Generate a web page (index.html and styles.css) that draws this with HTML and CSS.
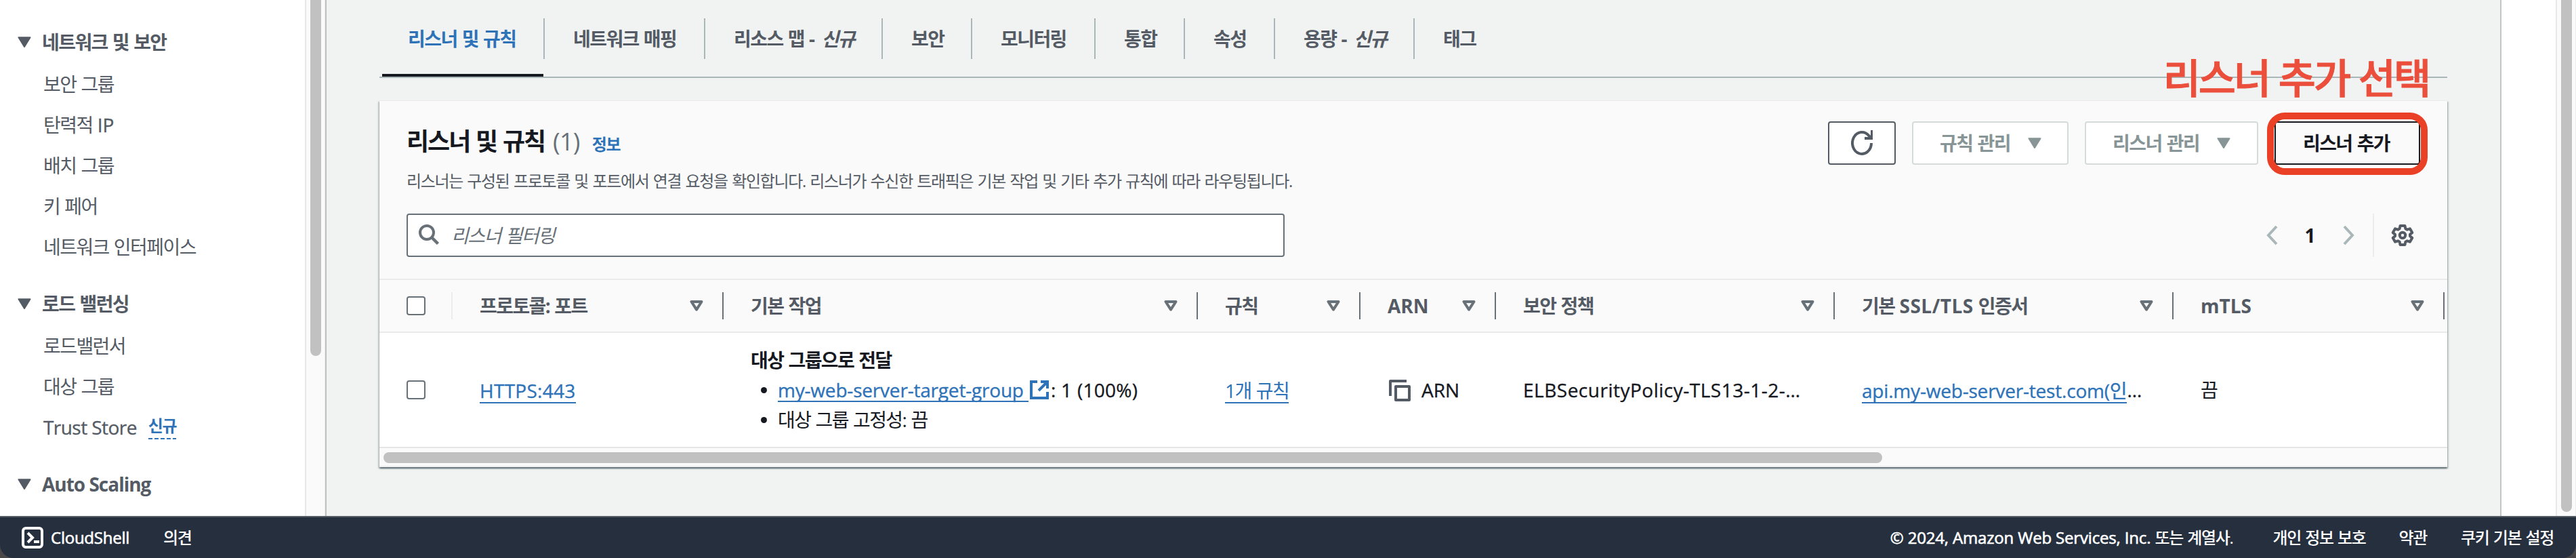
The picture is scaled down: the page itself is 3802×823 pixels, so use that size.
FILE: index.html
```
<!DOCTYPE html>
<html lang="ko">
<head>
<meta charset="utf-8">
<title>리스너 및 규칙</title>
<link rel="stylesheet" href="styles.css">
</head>
<body>
<svg class="defs" width="0" height="0">
  <symbol id="caret" viewBox="0 0 20 16"><path d="M1.5 1.2h17L10 15z" fill="currentColor" stroke="currentColor" stroke-width="2" stroke-linejoin="round"/></symbol>
  <symbol id="sort" viewBox="0 0 20 16"><path d="M2.5 2h15L10 13.6z" fill="none" stroke="currentColor" stroke-width="4" stroke-linejoin="round"/></symbol>
</svg>
<div class="page">
  <nav class="sidebar">
    <h3 class="side-head"><svg class="caret"><use href="#caret"/></svg>네트워크 및 보안</h3>
    <a class="side-item">보안 그룹</a>
    <a class="side-item">탄력적 <span class="en">IP</span></a>
    <a class="side-item">배치 그룹</a>
    <a class="side-item">키 페어</a>
    <a class="side-item">네트워크 인터페이스</a>
    <h3 class="side-head spaced"><svg class="caret"><use href="#caret"/></svg>로드 밸런싱</h3>
    <a class="side-item">로드밸런서</a>
    <a class="side-item">대상 그룹</a>
    <a class="side-item"><span class="en snug">Trust Store</span><span class="new">신규</span></a>
    <h3 class="side-head spaced"><svg class="caret"><use href="#caret"/></svg><span class="en tight">Auto Scaling</span></h3>
  </nav>
  <div class="track side-track"><div class="thumb"></div></div>
  <main class="main">
    <div class="tabs">
      <a class="tab active">리스너 및 규칙</a>
      <a class="tab t2">네트워크 매핑</a>
      <a class="tab t3">리소스 맵 -&nbsp;<i>신규</i></a>
      <a class="tab t4">보안</a>
      <a class="tab t5">모니터링</a>
      <a class="tab t6">통합</a>
      <a class="tab t7">속성</a>
      <a class="tab t8">용량 -&nbsp;<i>신규</i></a>
      <a class="tab t9">태그</a>
    </div>
    <section class="card">
      <header class="card-head">
        <div class="title-row">
          <div class="titles">
            <h2>리스너 및 규칙<span class="count">(1)</span><a class="info">정보</a></h2>
            <p>리스너는 구성된 프로토콜 및 포트에서 연결 요청을 확인합니다. 리스너가 수신한 트래픽은 기본 작업 및 기타 추가 규칙에 따라 라우팅됩니다.</p>
          </div>
          <div class="actions">
            <button class="btn refresh"><svg width="32" height="38" viewBox="0 0 32 38"><path d="M30 19A14 16 0 1 1 26.2 8L30 12" fill="none" stroke="currentColor" stroke-width="4"/><path d="M31 0V12H20" fill="none" stroke="currentColor" stroke-width="4"/></svg></button>
            <button class="btn disabled rules">규칙 관리<svg class="caret"><use href="#caret"/></svg></button>
            <button class="btn disabled listeners">리스너 관리<svg class="caret"><use href="#caret"/></svg></button>
            <div class="marked">
              <button class="btn add">리스너 추가</button>
              <span class="ring"></span>
              <span class="note">리스너 추가 선택</span>
            </div>
          </div>
        </div>
        <div class="filter-row">
          <div class="search"><svg width="32" height="32" viewBox="0 0 32 32"><circle cx="13" cy="12" r="10" fill="none" stroke="currentColor" stroke-width="4"/><path d="M20 19l9.500 9.500" stroke="currentColor" stroke-width="4.500"/></svg><i>리스너 필터링</i></div>
          <div class="pager">
            <svg class="prev" width="18" height="30" viewBox="0 0 18 30"><path d="M15 2L3 15l12 13" fill="none" stroke="#aab7b8" stroke-width="4"/></svg>
            <b class="en">1</b>
            <svg class="next" width="18" height="30" viewBox="0 0 18 30"><path d="M3 2l12 13L3 28" fill="none" stroke="#aab7b8" stroke-width="4"/></svg>
            <span class="gear"><svg width="34" height="34" viewBox="0 0 34 34"><path d="M13.500 3h7l.8 4.200 2.600 1.500 4-1.400 3.300 5.800-3.200 2.700v2.400l3.200 2.700-3.300 5.800-4-1.400-2.600 1.500-.8 4.200h-7l-.8-4.200-2.600-1.500-4 1.400-3.300-5.800L6 18.200v-2.400l-3.200-2.700 3.300-5.800 4 1.400 2.600-1.500z" fill="none" stroke="currentColor" stroke-width="4" stroke-linejoin="round"/><circle cx="17" cy="17" r="4.200" fill="none" stroke="currentColor" stroke-width="4"/></svg></span>
          </div>
        </div>
      </header>
      <div class="grid thead">
        <div class="th check"><span class="box"></span></div>
        <div class="th"><span>프로토콜: 포트</span><svg class="caret"><use href="#sort"/></svg></div>
        <div class="th"><span>기본 작업</span><svg class="caret"><use href="#sort"/></svg></div>
        <div class="th"><span>규칙</span><svg class="caret"><use href="#sort"/></svg></div>
        <div class="th"><span class="en">ARN</span><svg class="caret"><use href="#sort"/></svg></div>
        <div class="th"><span>보안 정책</span><svg class="caret"><use href="#sort"/></svg></div>
        <div class="th"><span>기본 <span class="en wide">SSL/TLS</span> 인증서</span><svg class="caret"><use href="#sort"/></svg></div>
        <div class="th"><span class="en">mTLS</span><svg class="caret"><use href="#sort"/></svg></div>
      </div>
      <div class="grid tbody">
        <div class="td check"><span class="box"></span></div>
        <div class="td"><a class="link en loose">HTTPS:443</a></div>
        <div class="td action">
          <b>대상 그룹으로 전달</b>
          <ul>
            <li class="en"><a class="link name">my-web-server-target-group&nbsp;</a><svg class="ext" width="28" height="28" viewBox="0 0 28 28"><path d="M11 2H2v24h24v-9M16 2h10v10M25 3L13 15" fill="none" stroke="currentColor" stroke-width="4"/></svg><span class="loose">: 1 (100%)</span></li>
            <li>대상 그룹 고정성: 끔</li>
          </ul>
        </div>
        <div class="td"><a class="link">1개 규칙</a></div>
        <div class="td arn en"><svg width="32" height="32" viewBox="0 0 32 32"><path d="M26 2H2v22" fill="none" stroke="currentColor" stroke-width="4" stroke-linejoin="round"/><rect x="10" y="10" width="20" height="20" fill="none" stroke="currentColor" stroke-width="4" stroke-linejoin="round"/></svg>ARN</div>
        <div class="td en wide">ELBSecurityPolicy-TLS13-1-2-…</div>
        <div class="td en name"><a class="link">api.my-web-server-test.com(인</a>…</div>
        <div class="td">끔</div>
      </div>
      <div class="hscroll"><div class="hthumb"></div></div>
    </section>
  </main>
  <div class="gutter"></div>
  <div class="track page-track"><div class="thumb"></div></div>
</div>
<footer class="footer">
  <svg width="32" height="32" viewBox="0 0 32 32"><rect x="2" y="2" width="28" height="28" rx="4" fill="none" stroke="#fff" stroke-width="4"/><path d="M9 9l7 7-7 7" fill="none" stroke="#fff" stroke-width="4"/><path d="M18 22h8" stroke="#fff" stroke-width="4"/></svg>
  <span class="en shell">CloudShell</span>
  <span class="feedback">의견</span>
  <span class="copy"><span class="en name">© 2024, Amazon Web Services, Inc.</span> 또는 계열사.</span>
  <span class="privacy">개인 정보 보호</span>
  <span class="terms">약관</span>
  <span>쿠키 기본 설정</span>
</footer>
</body>
</html>
```
FILE: styles.css
```
* { box-sizing: border-box; letter-spacing: var(--tracking); }
body {
  --tracking: -0.056em;
  margin: 0; width: 3802px; height: 823px; overflow: hidden;
  display: flex; flex-direction: column;
  background: #4a4748; color: #16191f;
  font: 28px/40px "Open Sans", "Noto Sans CJK KR", sans-serif;
  word-spacing: 0.05em;
}
h2, h3, p, ul { margin: 0; padding: 0; font-size: inherit; }
svg { flex: none; display: block; }
.defs { position: absolute; }
.en { --tracking: 0em; word-spacing: 0; -webkit-text-stroke: 0.35px currentColor; }
.th .en, .side-head .en, b.en { -webkit-text-stroke: 0; }
.loose { --tracking: 0.01em; }
.wide { --tracking: 0.018em; }
.name { --tracking: -0.007em; }
.snug { --tracking: -0.02em; }
.tight { --tracking: -0.036em; }
.page { display: flex; height: 761px; background: #fff; }
.caret { width: 20px; height: 16px; }

/* Side navigation */
.sidebar { width: 450px; padding: 42px 0 0 26px; color: #545b64; }
.side-head { display: flex; align-items: center; gap: 16px; height: 40px; font-weight: 700; }
.side-head.spaced { margin-top: 44px; }
.side-item { display: flex; height: 40px; margin: 22px 0 0 38px; white-space: pre; }
.side-item + .side-item { margin-top: 20px; }
.new {
  height: 36px; margin: 2px 0 0 17px; color: #2e73b8; font-size: 24px; line-height: 32px; font-weight: 700;
  background: repeating-linear-gradient(90deg, #2e73b8 0 6px, transparent 6px 9px) 0 100% / 100% 2px no-repeat;
}
.track { background: #fafafa; border-left: 2px solid #e8e8e8; }
.thumb { width: 16px; background: #c1c1c1; border-radius: 0 0 8px 8px; margin-left: 6px; }
.side-track { width: 30px; border-right: 1px solid #ececec; }
.side-track .thumb { height: 525px; }
.page-track { width: 30px; border-right: 1px solid #ececec; }
.page-track .thumb { height: 755px; }
.gutter { width: 80px; background: #fff; }

/* Content */
.main { width: 3212px; padding: 0 78px; background: #f1f3f3; border-left: 2px solid #bcc2c4; border-right: 2px solid #c0c6c8; }
.tabs { display: flex; height: 115px; padding: 27px 0 0 4px; border-bottom: 2px solid #aab7b8; color: #545b64; font-weight: 700; white-space: pre; }
.tab { height: 60px; padding-left: 42px; line-height: 60px; border-right: 2px solid #aab7b8; }
.tab i { margin-left: 4px; }
.tab.active { width: 240px; height: 86px; padding-left: 38px; color: #2e73b8; border: 0; background: linear-gradient(#16191f, #16191f) 0 100% / 238px 4px no-repeat, linear-gradient(#aab7b8, #aab7b8) 100% 0 / 2px 60px no-repeat; }
.t2 { width: 237px; } .t3 { width: 262px; } .t4 { width: 132px; } .t5 { width: 182px; }
.t6 { width: 132px; } .t7 { width: 133px; } .t8 { width: 206px; } .t9 { border: 0; }
.card {
  height: 541px; margin-top: 33px; background: #fafafa;
  border-top: 1px solid #eaeded;
  box-shadow: 0 2px 2px rgba(0, 28, 36, .5), 2px 2px 2px rgba(0, 28, 36, .15), -2px 2px 2px rgba(0, 28, 36, .15);
}
.card-head { height: 262px; padding: 30px 40px 0; }
.title-row { display: flex; justify-content: space-between; height: 136px; }
h2 { display: flex; align-items: baseline; height: 60px; font-size: 36px; line-height: 60px; font-weight: 700; white-space: pre; }
.count { --tracking: -0.02em; margin-left: 12px; color: #687078; font-weight: 400; }
.info { margin-left: 18px; color: #2e73b8; font-size: 24px; }
p { --tracking: -0.055em; font-size: 24px; line-height: 56px; color: #545b64; }
.actions { display: flex; gap: 24px; }
.btn {
  display: flex; align-items: center; height: 64px; padding: 0; background: #fff; color: #545b64;
  border: 2px solid #545b64; border-radius: 4px; font: inherit; font-weight: 700; word-spacing: inherit; white-space: pre;
}
.refresh { width: 100px; justify-content: center; }
.disabled { padding-left: 39px; color: #879596; border-color: #d5dbdb; }
.disabled .caret { margin-left: 26px; }
.rules { width: 231px; } .listeners { width: 256px; }
.marked { position: relative; }
.add { width: 215px; padding-right: 3px; justify-content: center; color: #16191f; border-color: #16191f; background: #fafafa; box-shadow: 0 0 0 6px #fff; }
.ring { position: absolute; left: -11px; top: -13px; width: 237px; height: 92px; border: 10px solid #ea4025; border-radius: 26px; }
.note { --tracking: -0.052em; position: absolute; right: -13px; top: -104px; color: #eb4f3c; font-size: 60px; line-height: 80px; font-weight: 500; -webkit-text-stroke: 1px #eb4f3c; white-space: pre; }
.filter-row { display: flex; justify-content: space-between; }
.search { display: flex; align-items: center; gap: 17px; width: 1296px; height: 64px; padding-left: 15px; background: #fff; border: 2px solid #687078; border-radius: 4px; color: #687078; }
.pager { display: flex; align-items: center; height: 64px; }
.pager b { margin: 0 39px 0 38px; width: 17px; text-align: center; }
.gear { display: flex; align-items: center; height: 64px; margin-left: 27px; padding: 0 9px 0 25px; border-left: 2px solid #eaeded; color: #545b64; }

/* Table */
.grid { display: grid; grid-template-columns: 108px 400px 700px 240px 200px 500px 500px 400px; overflow: hidden; }
.thead { height: 80px; border: solid #eaeaea; border-width: 2px 0; color: #545b64; font-weight: 700; }
.th { display: flex; align-items: center; justify-content: space-between; height: 40px; margin-top: 18px; padding: 0 28px 0 40px; border-right: 2px solid #687078; white-space: pre; }
.th .caret { color: #687078; }
.th.check { border-color: #eaeded; }
.box { width: 28px; height: 28px; background: #fff; border: 2px solid #687078; border-radius: 4px; }
.tbody { height: 170px; background: #fff; border-bottom: 2px solid #e6e6e6; }
.td { display: flex; align-items: center; padding-left: 40px; white-space: pre; }
.link { color: #2e73b8; height: 39px; border-bottom: 2px solid #2e73b8; }
.action { flex-direction: column; align-items: flex-start; justify-content: center; }
.action b, .action li { display: flex; height: 44px; line-height: 44px; }
.action ul { display: flex; flex-direction: column; list-style: none; }
.action li::before { content: ""; width: 9px; height: 9px; margin: 18px 16px 0 15px; border-radius: 50%; background: #16191f; }
.action .link { height: 40px; }
.ext { margin: 8px 3px 0 2px; color: #2e73b8; }
.arn svg { margin: 2px 16px 0 2px; color: #545b64; }
.hscroll { height: 28px; padding: 6px; border-bottom: 2px solid #eee; }
.hthumb { width: 2212px; height: 16px; background: #c1c1c1; border-radius: 8px; }

/* Footer */
.footer { display: flex; align-items: center; height: 62px; padding: 0 33px 0 32px; background: #262f3e; border-top: 2px solid #545b64; border-radius: 0 0 20px 20px; color: #fff; font-size: 24px; font-weight: 500; white-space: pre; }
.footer .en { -webkit-text-stroke: 0.6px #fff; }
.shell { --tracking: -0.01em; margin-left: 11px; }
.feedback { margin-left: 50px; }
.copy { margin-left: auto; margin-right: 59px; }
.privacy { margin-right: 49px; }
.terms { margin-right: 50px; }
```
